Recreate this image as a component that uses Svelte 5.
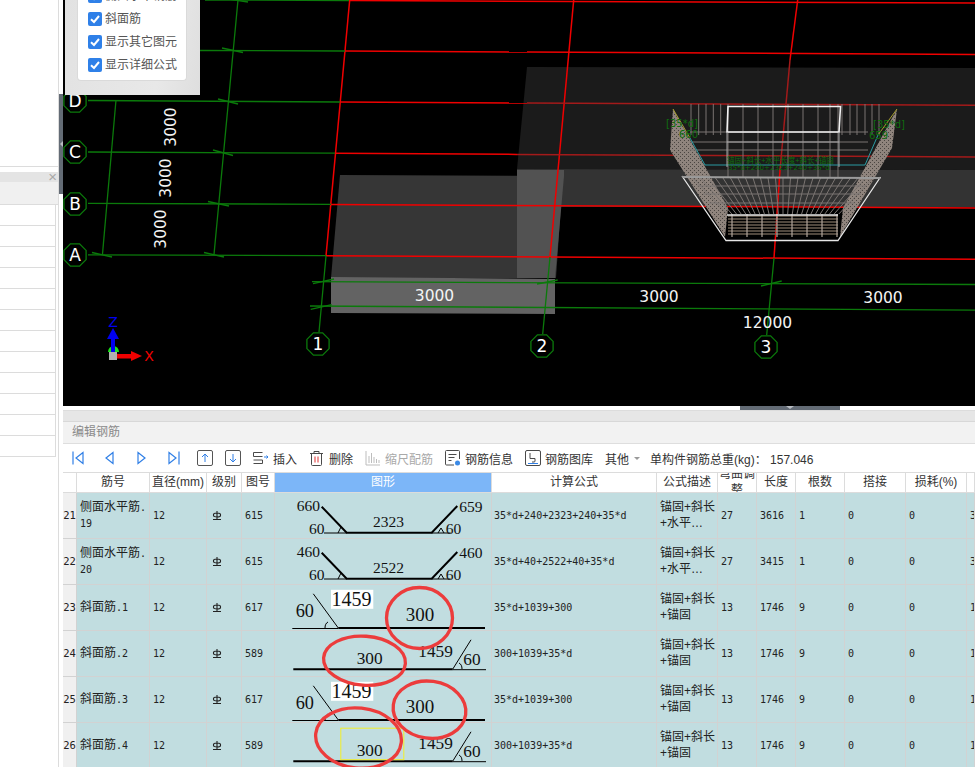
<script>
  const octagon = (cx, cy, r = 12) =>
    Array.from({ length: 8 }, (_, i) => {
      const a = Math.PI / 8 + (i * Math.PI) / 4;
      return `${(cx + r * Math.cos(a)).toFixed(1)},${(cy + r * Math.sin(a)).toFixed(1)}`;
    }).join(' ');

  const axisLabels = [
    { t: 'A', x: 75, y: 255 },
    { t: 'B', x: 75, y: 204 },
    { t: 'C', x: 75, y: 152 },
    { t: 'D', x: 75, y: 101 },
    { t: '1', x: 318, y: 344 },
    { t: '2', x: 542, y: 346 },
    { t: '3', x: 766, y: 347 }
  ];

  const greenLines = [
    [205, 0, 349, 0.5], [200, 50.5, 345, 51], [88, 100.5, 340, 102], [88, 152, 335, 153.2],
    [88, 203.3, 331, 204.3], [88, 254.8, 326, 255.7], [312, 281.7, 975, 284.5], [310, 306, 975, 310.2],
    [116, 100, 102.5, 254], [238, 0, 214, 254.5], [326, 256, 319, 332], [550, 257, 542.7, 334], [774, 258, 766.7, 335]
  ];
  const ticks = [
    [92, 252.5, 112, 257], [204, 252.5, 224, 257], [208, 201.5, 229, 206], [213, 150, 233, 155.5],
    [218, 99, 238, 104], [222, 48, 243, 52.5], [228, -1, 248, 2], [313, 283.7, 334, 279],
    [310.7, 309.3, 331.7, 304.7], [537, 284, 557.7, 280], [761, 286, 781.7, 281]
  ];
  const redBright = [
    [349, 0.5, 975, 3], [345, 51, 527, 52], [340, 102, 527, 103], [335, 153.2, 517, 154.4],
    [331, 204.4, 975, 208], [326, 255.7, 975, 259.3], [349.7, 0, 326, 256], [573.7, 0, 550, 257],
    [797.7, 0, 790, 60], [780, 170, 774, 258], [527, 52, 975, 54.5]
  ];
  const redDim = [[527, 103, 975, 105.3], [517, 154.4, 975, 157], [790, 60, 780, 170]];

  const sideBars = [691, 698.7, 706, 713.3, 720.7, 842, 850, 857, 865, 872, 879];
  const midBars = [728, 743, 758, 773, 788, 803, 818, 830, 838];
  const lowerBars = Array.from({ length: 25 }, (_, i) => 693 + i * 7.5);
  const floorBars = Array.from({ length: 8 }, (_, i) => 732 + i * 15);
  const floorRungs = Array.from({ length: 7 }, (_, i) => 216 + i * 3);

  const rows = [
    { no: 21, name: '侧面水平筋', tail: '.', sub: '19', fig: '615', formula: '35*d+240+2323+240+35*d', desc: ['锚固+斜长', '+水平…'], bend: 27, len: 3616, count: 1, last: '3', shape: 'a', labels: ['660', '659', '2323'] },
    { no: 22, name: '侧面水平筋', tail: '.', sub: '20', fig: '615', formula: '35*d+40+2522+40+35*d', desc: ['锚固+斜长', '+水平…'], bend: 27, len: 3415, count: 1, last: '3', shape: 'a', labels: ['460', '460', '2522'] },
    { no: 23, name: '斜面筋', tail: '.1', fig: '617', formula: '35*d+1039+300', desc: ['锚固+斜长', '+锚固'], bend: 13, len: 1746, count: 9, last: '1', shape: 'b' },
    { no: 24, name: '斜面筋', tail: '.2', fig: '589', formula: '300+1039+35*d', desc: ['锚固+斜长', '+锚固'], bend: 13, len: 1746, count: 9, last: '1', shape: 'c' },
    { no: 25, name: '斜面筋', tail: '.3', fig: '617', formula: '35*d+1039+300', desc: ['锚固+斜长', '+锚固'], bend: 13, len: 1746, count: 9, last: '1', shape: 'b' },
    { no: 26, name: '斜面筋', tail: '.4', fig: '589', formula: '300+1039+35*d', desc: ['锚固+斜长', '+锚固'], bend: 13, len: 1746, count: 9, last: '1', shape: 'c', mark: true }
  ];
  const heads = ['', '筋号', '直径(mm)', '级别', '图号', '图形', '计算公式', '公式描述', '弯曲调整', '长度', '根数', '搭接', '损耗(%)', ''];
  const checks = ['侧面水平钢筋', '斜面筋', '显示其它图元', '显示详细公式'];
  const leftRows = Array.from({ length: 12 });
</script>

<div class="root">
  <aside class="left">
    <div class="left-inner">
      <div class="left-top"></div>
      <div class="left-title"><span class="close">×</span></div>
      <div class="left-band"></div>
      <div class="left-rows">
        {#each leftRows as _}<div class="left-row"></div>{/each}
      </div>
    </div>
    <div class="strip"><span class="strip-arrow"></span></div>
  </aside>

  <main class="right">
    <section class="viewport">
      <svg class="scene" width="912" height="406" viewBox="63 0 912 406">
        <defs>
          <pattern id="mesh" width="4" height="4" patternUnits="userSpaceOnUse">
            <rect width="4" height="4" fill="#8f847d" />
            <rect width="1" height="1" fill="#4a4541" />
            <rect x="2" y="2" width="1" height="1" fill="#4a4541" />
          </pattern>
        </defs>
        <rect x="63" y="0" width="912" height="406" fill="#000" />

        <polygon points="527,67 975,68 975,170 517,169" fill="#1b1b1b" />
        <polygon points="517,169 975,170 975,207 517,207" fill="#333" />
        <polygon points="340,175 563,176 556,278 331,278" fill="#363636" />
        <polygon points="517,170 564,170 564,176 555,278 517,278" fill="#525252" />
        <polygon points="331,277 555,279 555,314 331,313" fill="#636363" />

        {#each redBright as l}<line x1={l[0]} y1={l[1]} x2={l[2]} y2={l[3]} class="red" />{/each}
        {#each redDim as l}<line x1={l[0]} y1={l[1]} x2={l[2]} y2={l[3]} class="red-dim" />{/each}
        {#each greenLines as l}<line x1={l[0]} y1={l[1]} x2={l[2]} y2={l[3]} class="green" />{/each}
        {#each ticks as l}<line x1={l[0]} y1={l[1]} x2={l[2]} y2={l[3]} class="green" />{/each}

        {#each axisLabels as a}
          <polygon points={octagon(a.x, a.y)} class="oct" />
          <text x={a.x} y={a.y + 6} class="axis">{a.t}</text>
        {/each}

        <text x="434.5" y="300.500" class="dim">3000</text>
        <text x="659" y="302" class="dim">3000</text>
        <text x="883" y="303" class="dim">3000</text>
        <text x="767.5" y="328" class="dim">12000</text>
        <text x="176" y="127" class="dim" transform="rotate(-90 176 127)">3000</text>
        <text x="171" y="178" class="dim" transform="rotate(-90 171 178)">3000</text>
        <text x="166" y="229" class="dim" transform="rotate(-90 166 229)">3000</text>

        <!-- rebar cage -->
        <polygon points="673,109 670,150 725,237 728,208" fill="url(#mesh)" />
        <polygon points="897,109 892,148 840,237 843,208" fill="url(#mesh)" />
        {#each sideBars as x}<line x1={x} y1="104" x2={x} y2="135" class="bar" />{/each}
        {#each midBars as x}<line x1={x} y1="104" x2={x} y2="178" class="bar" />{/each}
        {#each [132, 142, 150] as y}<line x1="690" y1={y} x2="868" y2={y} class="bar" />{/each}
        {#each lowerBars as x}<line x1={x} y1="178" x2={783 + (x - 783) * 0.62} y2="214" class="bar" />{/each}
        {#each [186, 194, 203] as y}<line x1={692 + (y - 178) * 0.7} y1={y} x2={872 - (y - 178) * 0.7} y2={y} class="bar" />{/each}
        {#each floorRungs as y}<line x1="728" y1={y} x2="838" y2={y} class="rung" />{/each}
        {#each floorBars as x}<line x1={x} y1="214" x2={x} y2="237" class="bar-warm" />{/each}

        <polyline points="690,138 705,165 865,165 878,135" class="teal" />
        <line x1="673" y1="109" x2="690" y2="138" class="olive" />
        <line x1="897" y1="109" x2="878" y2="135" class="olive" />

        <polygon points="728,106.5 840.5,106.5 839,132 727,132" class="cage-top" />
        <line x1="727" y1="132" x2="727" y2="167" class="bar-light" />
        <line x1="839" y1="132" x2="839" y2="167" class="bar-light" />
        <line x1="727" y1="142" x2="839" y2="142" class="bar-light" />
        <polyline points="682,176 726,240.5 838,240.5 880.5,177" class="cage" />
        <line x1="682" y1="177" x2="880.5" y2="178" class="cage-grey" />
        <line x1="727" y1="215" x2="838" y2="215" class="cage" />

        <text x="666" y="127" class="note">[35*d]</text>
        <text x="873" y="128" class="note">[35*d]</text>
        <text x="679" y="138" class="note">660</text>
        <text x="869" y="139" class="note">659</text>
        <text x="727" y="163" class="note cjk">锚固+斜长+水平长度+斜长+锚固</text>
        <text x="728" y="170" class="note small">35*d+240+2323+240+35*d</text>

        <!-- orientation gizmo -->
        <path d="M108 352a5.500 6 0 0 1 11 0z" fill="#19e619" />
        <rect x="111" y="337" width="4" height="16" fill="#0000f0" />
        <polygon points="113,328 107,339 119,339" fill="#0000f0" />
        <rect x="117" y="354" width="15" height="4.500" fill="#f00000" />
        <polygon points="131,351 142,356 131,361" fill="#f00000" />
        <rect x="109" y="352" width="8" height="8" fill="#b0b0b0" />
        <text x="113" y="327" class="giz blue">Z</text>
        <text x="149" y="361" class="giz redt">X</text>
      </svg>

      <div class="popup">
        <div class="card">
          {#each checks as c}
            <label class="check">
              <svg width="14" height="14" viewBox="0 0 14 14">
                <rect width="14" height="14" rx="2" fill="#2f80e8" />
                <path d="M3 7.200 6 10 11 4" fill="none" stroke="#fff" stroke-width="2" />
              </svg>
              <span>{c}</span>
            </label>
          {/each}
        </div>
      </div>
    </section>

    <section class="editor">
      <div class="handle"><span class="handle-arrow"></span></div>
      <div class="graybar"></div>
      <div class="title">编辑钢筋</div>
      <div class="toolbar">
        <svg class="nav" width="12" height="14" viewBox="0 0 12 14"><path d="M1 .5v13M11 1.500 4 7l7 5.500z" /></svg>
        <svg class="nav" width="12" height="14" viewBox="0 0 12 14"><path d="M9 1.500 2 7l7 5.500z" /></svg>
        <svg class="nav" width="12" height="14" viewBox="0 0 12 14"><path d="M2 1.500 9 7l-7 5.500z" /></svg>
        <svg class="nav" width="12" height="14" viewBox="0 0 12 14"><path d="M1 1.500 8 7l-7 5.500zM11 .5v13" /></svg>
        <svg class="box first-box" width="16" height="16" viewBox="0 0 16 16"><rect x=".5" y=".5" width="15" height="15" rx="1.500" /><path class="arrow" d="M8 12V4M5 7l3-3 3 3" /></svg>
        <svg class="box" width="16" height="16" viewBox="0 0 16 16"><rect x=".5" y=".5" width="15" height="15" rx="1.500" /><path class="arrow" d="M8 4v8M5 9l3 3 3-3" /></svg>
        <button class="tool"><svg width="16" height="16" viewBox="0 0 16 16" class="ico"><path d="M9.500 2.500H.5v4h9M.5 10h9v3.500H.5" /><path class="arrow" d="M11 7h4M13.500 5.500 15 7l-1.500 1.500" /></svg>插入</button>
        <button class="tool"><svg width="16" height="16" viewBox="0 0 16 16" class="ico"><path d="M1 3.500h13M5 3.500V1.500h5v2M2.500 3.500v11a1 1 0 0 0 1 1h8a1 1 0 0 0 1-1v-11" /><path d="M6 6.500v6M9 6.500v6" stroke="#e03030" /></svg>删除</button>
        <button class="tool off"><svg width="16" height="16" viewBox="0 0 16 16" class="ico faint"><path d="M1 1v14h14M4 6v7M6.500 3v10M9 7v6M11.500 9v4M14 10v3" /></svg>缩尺配筋</button>
        <button class="tool"><svg width="16" height="16" viewBox="0 0 16 16" class="ico"><path d="M9 15H1.500a1 1 0 0 1-1-1V1.500a1 1 0 0 1 1-1h12a1 1 0 0 1 1 1V9M3.500 4.500h8M3.500 7.500h6M3.500 10.500h3" /><circle cx="12.500" cy="13" r="2.500" fill="#3b8ae6" stroke="none" /></svg>钢筋信息</button>
        <button class="tool"><svg width="16" height="16" viewBox="0 0 16 16" class="ico"><rect x=".5" y=".5" width="15" height="15" rx="1.500" /><path d="M5 3v5.500h5V11a1 1 0 0 1-1 1H7" /><path class="arrow" d="M3 13.500h10" /></svg>钢筋图库</button>
        <span class="other">其他<span class="caret"></span></span>
        <span class="total">单构件钢筋总重(kg)： 157.046</span>
      </div>

      <div class="grid head">
        {#each heads as h, i}
          <div class="th" class:sel={i === 5}><span class="th-text">{h}</span></div>
        {/each}
      </div>

      {#each rows as r}
        <div class="grid row">
          <div class="td idx">{r.no}</div>
          <div class="td name"><span>{r.name}<small>{r.tail}</small></span>{#if r.sub}<small>{r.sub}</small>{/if}</div>
          <div class="td">12</div>
          <div class="td grade">
            <svg width="10" height="11" viewBox="0 0 10 11"><path d="M1.500 4.500a3.500 1.500 0 0 1 7 0v1a3.500 1.500 0 0 1-7 0zM5 1v8.500M1 9.500h8" /></svg>
          </div>
          <div class="td">{r.fig}</div>
          <div class="td shape">
            <svg width="216" height="45" viewBox="0 0 216 45">
              {#if r.shape === 'a'}
                <path class="thick" d="M46.700 13.700 71.700 39.700H156.700L182.300 13" />
                <path class="thin" d="M49 40H71.700M156.700 40H175.700M63 40l3-6 3 3M163 40l3-5 3 5" />
                <text x="21.700" y="17.700" class="n15">{r.labels[0]}</text>
                <text x="184.300" y="18.700" class="n15">{r.labels[1]}</text>
                <text x="98" y="33.700" class="n15">{r.labels[2]}</text>
                <text x="34" y="41" class="n15">60</text>
                <text x="170.700" y="41" class="n15">60</text>
              {:else if r.shape === 'b'}
                <path class="thick" d="M63.300 43H210" />
                <path class="thin" d="M17.300 43.500H63.300M38.300 8.800 63.300 43M50 43c0-3 1-5 3-6" />
                <rect x="56" y="4.800" width="42.300" height="19" fill="#fff" />
                <text x="56.500" y="21" class="n20">1459</text>
                <text x="20.700" y="32" class="n18">60</text>
                <text x="130.700" y="35.500" class="n19">300</text>
              {:else}
                <path class="thick" d="M18.300 38.200H177.700" />
                <path class="thin" d="M177.700 38.700H211M177.700 38.200 196 8.800M184 32c2 1 3 3 3 6" />
                {#if r.mark}<rect x="65.800" y="5.200" width="63" height="31.500" fill="none" stroke="#f2ee2a" />{/if}
                <text x="143.300" y="26" class="n17">1459</text>
                <text x="188.300" y="34" class="n17">60</text>
                <text x="81.700" y="33" class="n17">300</text>
              {/if}
            </svg>
          </div>
          <div class="td formula">{r.formula}</div>
          <div class="td name desc">{#each r.desc as d}<span>{d}</span>{/each}</div>
          <div class="td">{r.bend}</div>
          <div class="td">{r.len}</div>
          <div class="td">{r.count}</div>
          <div class="td">0</div>
          <div class="td">0</div>
          <div class="td end">{r.last}</div>
        </div>
      {/each}
    </section>
  </main>

  <svg class="marks" width="975" height="767" viewBox="0 0 975 767">
    <ellipse cx="419.500" cy="618" rx="33" ry="30.500" />
    <ellipse cx="364.500" cy="660.700" rx="41" ry="24.500" transform="rotate(4 364.500 660.700)" />
    <ellipse cx="429.500" cy="709.700" rx="36.500" ry="28.500" transform="rotate(8 429.500 709.700)" />
    <ellipse cx="358.500" cy="738" rx="43" ry="30" transform="rotate(6 358.500 738)" />
  </svg>
</div>

<style>
  :global(body) {
    margin: 0;
    background: #fff;
  }
  .root {
    position: relative;
    display: flex;
    width: 975px;
    height: 767px;
    overflow: hidden;
    font-family: "Liberation Sans", "Noto Sans CJK SC", sans-serif;
    font-size: 12px;
    color: #333;
  }

  /* left panel */
  .left {
    position: relative;
    flex: 0 0 63px;
    height: 100%;
  }
  .left-inner {
    width: 58px;
    height: 100%;
    border-right: 1px solid #dcdcdc;
  }
  .left-top {
    height: 166px;
    border-bottom: 1px solid #dcdcdc;
    margin-bottom: 5px;
  }
  .left-title {
    height: 10px;
    background: #e4e4e4;
    position: relative;
  }
  .close {
    position: absolute;
    right: 1px;
    top: -2px;
    color: #a8a8a8;
    font-size: 15px;
    line-height: 14px;
  }
  .left-band {
    height: 23px;
    background: #f0f0f0;
    border-bottom: 1px solid #dcdcdc;
    box-sizing: border-box;
  }
  .left-rows {
    width: 56px;
    border-right: 1px solid #dcdcdc;
    box-sizing: border-box;
  }
  .left-row {
    height: 21px;
    box-sizing: border-box;
    border-bottom: 1px solid #dcdcdc;
  }
  .strip {
    position: absolute;
    left: 59px;
    top: 94px;
    width: 4px;
    height: 100px;
    background: #636b75;
  }
  .strip-arrow {
    position: absolute;
    left: 1px;
    top: 47px;
    border-top: 3px solid transparent;
    border-bottom: 3px solid transparent;
    border-right: 3px solid #b8bcc2;
  }

  /* viewport */
  .right {
    flex: 1;
    min-width: 0;
    display: flex;
    flex-direction: column;
  }
  .viewport {
    position: relative;
    height: 406px;
    flex: none;
    background: #000;
  }
  .scene {
    display: block;
  }
  .red { stroke: #f00000; stroke-width: 1.500; }
  .red-dim { stroke: #a31a1a; stroke-width: 1.500; }
  .green { stroke: #0b7a0b; stroke-width: 1.300; }
  .oct { fill: #000; stroke: #0b7a0b; stroke-width: 1.300; }
  .axis {
    fill: #fff;
    font: 17px "DejaVu Sans", sans-serif;
    text-anchor: middle;
  }
  .dim {
    fill: #f4f4f4;
    font: 15.500px "DejaVu Sans", sans-serif;
    text-anchor: middle;
  }
  .bar { stroke: #7b7572; stroke-width: 1; }
  .bar-warm { stroke: #b0a49b; stroke-width: 1.200; }
  .bar-light { stroke: #a8a8a8; stroke-width: 1; }
  .rung { stroke: #6b5f52; stroke-width: 1.400; }
  .teal { fill: none; stroke: #2a9ba3; stroke-width: 1; }
  .olive { stroke: #a8a030; stroke-width: 1; }
  .cage-top { fill: none; stroke: #f2f2f2; stroke-width: 1.600; }
  .cage { fill: none; stroke: #e6e6e6; stroke-width: 1.300; }
  .cage-grey { stroke: #9b9b9b; stroke-width: 2; }
  .note {
    fill: #0f6e0f;
    font: 10px "DejaVu Sans", sans-serif;
  }
  .note.cjk { font: 7.500px "Noto Sans CJK SC", sans-serif; }
  .note.small { font-size: 7px; }
  .giz { font: 14px "DejaVu Sans", sans-serif; text-anchor: middle; }
  .blue { fill: #0000f0; }
  .redt { fill: #f00000; }

  /* popup */
  .popup {
    position: absolute;
    left: 2px;
    top: 0;
    width: 135px;
    height: 95px;
    box-sizing: border-box;
    padding: 0 13px 14px 12px;
    background: linear-gradient(100deg, #e2e2e2, #e8e8e8 70%, #dedede);
    display: flex;
  }
  .card {
    flex: 1;
    overflow: hidden;
    background: #fff;
    border: 1px solid #dadada;
    border-top: 0;
    border-radius: 0 0 4px 4px;
    display: flex;
    flex-direction: column;
    justify-content: flex-end;
    padding: 0 0 4px 10px;
  }
  .check {
    flex: 0 0 23px;
    display: flex;
    align-items: center;
    gap: 3px;
    color: #555;
    line-height: 1;
    white-space: nowrap;
  }
  .check svg {
    flex: none;
  }

  /* editor */
  .editor {
    position: relative;
    flex: 1;
    min-height: 0;
    padding-top: 4px;
    background: #fff;
  }
  .handle {
    position: absolute;
    left: 677px;
    top: 0;
    width: 100px;
    height: 4px;
    background: #636b75;
  }
  .handle-arrow {
    position: absolute;
    left: 46px;
    top: 0;
    border-left: 4px solid transparent;
    border-right: 4px solid transparent;
    border-top: 3px solid #b8bcc2;
  }
  .graybar {
    height: 12px;
    box-sizing: border-box;
    background: #e6e6e6;
    border-top: 1px solid #dcdcdc;
    border-bottom: 1px solid #d8d8d8;
  }
  .title {
    height: 22px;
    box-sizing: border-box;
    background: #f2f2f2;
    border-bottom: 1px solid #dedede;
    padding-left: 9px;
    line-height: 21px;
    color: #8a8a8a;
  }
  .toolbar {
    height: 28px;
    box-sizing: border-box;
    display: flex;
    align-items: center;
    padding-left: 9px;
    gap: 20px;
    white-space: nowrap;
  }
  .nav path {
    fill: none;
    stroke: #2f7fe6;
    stroke-width: 1.200;
  }
  .box rect {
    fill: none;
    stroke: #555;
  }
  .arrow {
    fill: none;
    stroke: #2f7fe6;
    stroke-width: 1;
  }
  .first-box {
    margin-left: -3px;
  }
  .box + .box,
  .box + .tool,
  .tool + .tool,
  .other {
    margin-left: -8px;
  }
  .tool {
    display: inline-flex;
    align-items: center;
    gap: 4px;
    padding: 0;
    border: 0;
    background: none;
    font: inherit;
    color: #333;
  }
  .tool.off {
    color: #a9a9a9;
  }
  .ico {
    fill: none;
    stroke: #4a4a4a;
    stroke-width: 1;
  }
  .ico.faint {
    stroke: #bdbdbd;
  }
  .other {
    display: inline-flex;
    align-items: center;
    gap: 4px;
  }
  .caret {
    border-left: 3px solid transparent;
    border-right: 3px solid transparent;
    border-top: 3px solid #9a9a9a;
    margin-left: 1px;
  }
  .total {
    margin-left: -10px;
  }

  /* table */
  .grid {
    display: grid;
    grid-template-columns: 14px 73px 57px 35px 33px 217px 165px 61px 39px 39px 49px 61px 61px 8px;
  }
  .head {
    height: 20.500px;
  }
  .th {
    display: flex;
    align-items: center;
    justify-content: center;
    overflow: hidden;
    box-sizing: border-box;
    border-right: 1px solid #dcdcdc;
    border-top: 1px solid #dcdcdc;
    border-bottom: 1px solid #dcdcdc;
    text-align: center;
    line-height: 16px;
    background: #fff;
  }
  .th-text {
    flex: none;
    max-width: 100%;
  }
  .th.sel {
    background: #7cb6f8;
    color: #fff;
  }
  .row {
    height: 46px;
  }
  .td {
    box-sizing: border-box;
    display: flex;
    align-items: center;
    padding-left: 3px;
    overflow: hidden;
    background: #c1dde0;
    border-right: 1px solid #d2d2d2;
    border-bottom: 1px solid #d2d2d2;
    font-family: "DejaVu Sans Mono", "Noto Sans CJK SC", monospace;
    font-size: 10px;
    color: #222;
    white-space: nowrap;
  }
  .idx {
    background: #f0f0f0;
    padding: 0;
    justify-content: center;
    font-size: 10.500px;
  }
  .name {
    flex-direction: column;
    align-items: flex-start;
    justify-content: center;
    line-height: 16px;
    font-size: 12px;
  }
  .name span {
    display: block;
  }
  .name small {
    font-size: 10px;
    display: inline;
  }
  .name > small {
    display: block;
  }
  .desc {
    font-family: "Liberation Sans", "Noto Sans CJK SC", sans-serif;
  }
  .formula {
    padding-left: 2px;
  }
  .grade {
    padding-left: 5px;
  }
  .grade path {
    fill: none;
    stroke: #222;
    stroke-width: 1.100;
  }
  .shape {
    padding: 0;
    overflow: visible;
    align-items: flex-start;
  }
  .shape svg {
    display: block;
    overflow: visible;
  }
  .thick {
    fill: none;
    stroke: #000;
    stroke-width: 2;
  }
  .thin {
    fill: none;
    stroke: #000;
    stroke-width: 1;
  }
  .shape text {
    fill: #111;
    font-family: "Liberation Serif", serif;
  }
  .shape .n15 { font-size: 15.500px; }
  .shape .n17 { font-size: 17.300px; }
  .shape .n18 { font-size: 18.300px; }
  .shape .n19 { font-size: 19px; }
  .shape .n20 { font-size: 20px; }

  /* hand-drawn annotation */
  .marks {
    position: absolute;
    left: 0;
    top: 0;
    pointer-events: none;
  }
  .marks ellipse {
    fill: none;
    stroke: #ec3c3c;
    stroke-width: 3.300;
  }
</style>
